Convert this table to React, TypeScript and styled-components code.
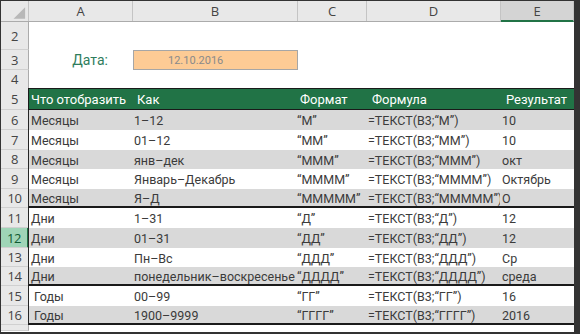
import styled, { createGlobalStyle } from 'styled-components';

type Band = 'white' | 'gray' | 'green';

type DataRow = {
  num: number;
  cells: string[];
  band: Band;
  height: number;
  thickBottom?: boolean;
  selected?: boolean;
};

const COLS = '28px 104px 165px 69px 134px 73px';

const dataRows: DataRow[] = [
  { num: 6, band: 'gray', height: 20, cells: ['Месяцы', '1–12', '“М”', '=ТЕКСТ(B3;“М”)', '10'] },
  { num: 7, band: 'white', height: 20, cells: ['Месяцы', '01–12', '“ММ”', '=ТЕКСТ(B3;“ММ”)', '10'] },
  { num: 8, band: 'gray', height: 19, cells: ['Месяцы', 'янв–дек', '“МММ”', '=ТЕКСТ(B3;“МММ”)', 'окт'] },
  { num: 9, band: 'white', height: 20, cells: ['Месяцы', 'Январь–Декабрь', '“ММММ”', '=ТЕКСТ(B3;“ММММ”)', 'Октябрь'] },
  { num: 10, band: 'gray', height: 19, thickBottom: true, cells: ['Месяцы', 'Я–Д', '“МММММ”', '=ТЕКСТ(B3;“МММММ”)', 'О'] },
  { num: 11, band: 'white', height: 20, cells: ['Дни', '1–31', '“Д”', '=ТЕКСТ(B3;“Д”)', '12'] },
  { num: 12, band: 'gray', height: 20, selected: true, cells: ['Дни', '01–31', '“ДД”', '=ТЕКСТ(B3;“ДД”)', '12'] },
  { num: 13, band: 'white', height: 19, cells: ['Дни', 'Пн–Вс', '“ДДД”', '=ТЕКСТ(B3;“ДДД”)', 'Ср'] },
  { num: 14, band: 'gray', height: 19, thickBottom: true, cells: ['Дни', 'понедельник–воскресенье', '“ДДДД”', '=ТЕКСТ(B3;“ДДДД”)', 'среда'] },
  { num: 15, band: 'white', height: 20, cells: ['Годы', '00–99', '“ГГ”', '=ТЕКСТ(B3;“ГГ”)', '16'] },
  { num: 16, band: 'gray', height: 19, thickBottom: true, cells: ['Годы', '1900–9999', '“ГГГГ”', '=ТЕКСТ(B3;“ГГГГ”)', '2016'] },
];

const bandColor: Record<Band, string> = {
  white: '#ffffff',
  gray: '#d9d9d9',
  green: '#217346',
};

// left padding per column; the "Годы" block sits a bit further in
const cellPad = (col: number, rowNum: number) => {
  if (col === 0) return rowNum >= 15 ? 5 : 2;
  if (col === 2) return 0;
  return 2;
};

const App = () => {
  return (
    <>
      <GlobalStyle />
      <Frame>
        <HeaderRow>
          <Corner>
            <svg width="28" height="20" viewBox="0 0 28 20">
              <polygon points="25,6 25,18 13,18" fill="#b8b8b8" />
            </svg>
          </Corner>
          <ColHeader>A</ColHeader>
          <ColHeader>B</ColHeader>
          <ColHeader>C</ColHeader>
          <ColHeader>D</ColHeader>
          <ColHeader $selected>E</ColHeader>
        </HeaderRow>

        <Row $h={28}>
          <RowHeader>2</RowHeader>
        </Row>
        <Row $h={20}>
          <RowHeader>3</RowHeader>
          <DateLabel>Дата:</DateLabel>
          <DateBox>12.10.2016</DateBox>
        </Row>
        <Row $h={18}>
          <RowHeader>4</RowHeader>
        </Row>
        <Row $h={22}>
          <RowHeader>5</RowHeader>
          <TitleBar>
            <Cell $light>Что отобразить</Cell>
            <Cell $light $pad={4}>Как</Cell>
            <Cell $light>Формат</Cell>
            <Cell $light $pad={5}>Формула</Cell>
            <Cell $light $pad={5}>Результат</Cell>
          </TitleBar>
        </Row>

        {dataRows.map((row) => (
          <Row key={row.num} $h={row.height}>
            <RowHeader $selected={row.selected}>{row.num}</RowHeader>
            <DataBar $band={row.band} $thick={row.thickBottom}>
              {row.cells.map((text, i) => (
                <Cell key={i} $pad={cellPad(i, row.num)}>
                  {text}
                </Cell>
              ))}
            </DataBar>
          </Row>
        ))}

        <Row $h={6}>
          <RowHeader />
        </Row>
      </Frame>
    </>
  );
};

export default App;

// Styled Components

const GlobalStyle = createGlobalStyle`
  html, body {
    margin: 0;
    padding: 0;
    background: #ffffff;
  }
`;

const Frame = styled.div`
  width: 580px;
  height: 334px;
  box-sizing: border-box;
  border-style: solid;
  border-color: #333333;
  border-width: 1px 6px 2px 1px;
  background: #ffffff;
  overflow: hidden;
  font-family: Roboto, "Noto Sans", sans-serif;
`;

const HeaderRow = styled.div`
  display: grid;
  grid-template-columns: ${COLS};
  height: 20px;
  background: #e8e8e8;
  border-bottom: 1px solid #ababab;
  box-sizing: content-box;
`;

const Corner = styled.div`
  border-right: 1px solid #c4c4c4;
  box-sizing: border-box;
  display: flex;
`;

const ColHeader = styled.div<{ $selected?: boolean }>`
  display: flex;
  align-items: center;
  justify-content: center;
  font-family: "Open Sans", sans-serif;
  font-size: 13px;
  color: #444444;
  box-sizing: border-box;
  border-right: 1px solid #c4c4c4;
  background: ${(p) => (p.$selected ? '#d4d4d4' : 'transparent')};
  border-bottom: ${(p) => (p.$selected ? '2px solid #217346' : 'none')};
  margin-bottom: ${(p) => (p.$selected ? '-1px' : '0')};
`;

const Row = styled.div<{ $h: number }>`
  display: grid;
  grid-template-columns: ${COLS};
  height: ${(p) => p.$h}px;
`;

const RowHeader = styled.div<{ $selected?: boolean }>`
  display: flex;
  align-items: center;
  justify-content: center;
  font-family: "Open Sans", sans-serif;
  font-size: 13px;
  color: ${(p) => (p.$selected ? '#0f5a32' : '#444444')};
  background: ${(p) => (p.$selected ? '#9fd5b7' : '#e8e8e8')};
  border-bottom: 1px solid #d0d0d0;
  border-right: ${(p) => (p.$selected ? '2px solid #217346' : '1px solid #ababab')};
  box-sizing: border-box;
  letter-spacing: -0.5px;
`;

const DateLabel = styled.div`
  display: flex;
  align-items: center;
  justify-content: flex-end;
  padding-right: 25px;
  font-size: 14px;
  color: #2f7d5c;
`;

const DateBox = styled.div`
  display: flex;
  align-items: center;
  padding-left: 34px;
  background: #fdcb95;
  border: 1px solid #a6a6a6;
  box-sizing: border-box;
  font-size: 11px;
  color: #8a8a8a;
`;

const TitleBar = styled.div`
  grid-column: 2 / 7;
  display: grid;
  grid-template-columns: 104px 165px 69px 134px 73px;
  background: ${bandColor.green};
  border-top: 1px solid #1a1a1a;
  border-bottom: 1px solid #1a1a1a;
  border-left: 1px solid #1a1a1a;
  margin-left: -1px;
  box-sizing: border-box;
`;

const DataBar = styled.div<{ $band: Band; $thick?: boolean }>`
  grid-column: 2 / 7;
  display: grid;
  grid-template-columns: 103px 165px 69px 134px 73px;
  background: ${(p) => bandColor[p.$band]};
  border-left: 1px solid #262626;
  border-bottom: ${(p) => (p.$thick ? '2px solid #1a1a1a' : 'none')};
  box-sizing: border-box;
  margin-left: -1px;
`;

const Cell = styled.div<{ $pad?: number; $light?: boolean }>`
  display: flex;
  align-items: center;
  padding-left: ${(p) => p.$pad ?? 2}px;
  padding-top: 1px;
  font-size: ${(p) => (p.$light ? 13 : 12.5)}px;
  color: ${(p) => (p.$light ? '#ffffff' : '#3b3b3b')};
  white-space: nowrap;
  overflow: hidden;
  min-width: 0;
`;
